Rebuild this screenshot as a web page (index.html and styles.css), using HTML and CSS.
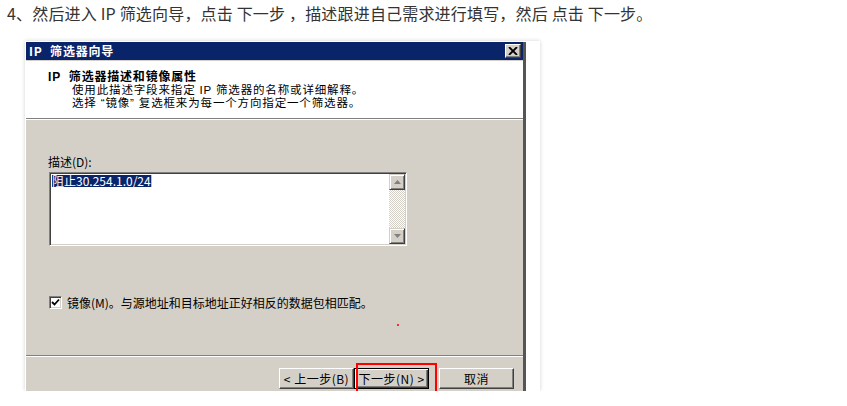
FILE: index.html
```html
<!DOCTYPE html>
<html lang="zh-CN">
<head>
<meta charset="utf-8">
<title>IP 筛选器向导</title>
<link rel="stylesheet" href="styles.css">
</head>
<body>
<p class="step">4、然后进入 IP 筛选向导，点击 下一步 ，描述跟进自己需求进行填写，然后 点击 下一步。</p>
<div class="shot">
  <div class="dialog">
    <div class="titlebar">
      <span class="title">IP 筛选器向导</span>
      <span class="close"><svg width="10" height="8" viewBox="0 0 10 8"><path d="M1 0 L9 8 M9 0 L1 8" stroke="#000" stroke-width="1.8" fill="none"/></svg></span>
    </div>
    <div class="header">
      <div class="h-title">IP 筛选器描述和镜像属性</div>
      <div class="h-sub">使用此描述字段来指定 IP 筛选器的名称或详细解释。</div>
      <div class="h-sub">选择<span class="q-open">“</span>镜像<span class="q-close">”</span>复选框来为每一个方向指定一个筛选器。</div>
    </div>
    <div class="body">
      <div class="label">描述(D):</div>
      <div class="textbox">
        <div class="tb-text"><span class="sel">阻止30.254.1.0/24</span><span class="caret"></span></div>
        <div class="scrollbar">
          <div class="sb-btn"><svg width="7" height="4" viewBox="0 0 7 4"><path d="M3.5 0 L7 4 L0 4 Z" fill="#808080"/></svg></div>
          <div class="sb-track"></div>
          <div class="sb-btn"><svg width="7" height="4" viewBox="0 0 7 4"><path d="M0 0 L7 0 L3.5 4 Z" fill="#808080"/></svg></div>
        </div>
      </div>
      <div class="check-row">
        <span class="checkbox"><svg width="9" height="9" viewBox="0 0 9 9"><polyline points="1,4 3.5,6.5 8,1.5" stroke="#000" stroke-width="1.8" fill="none"/></svg></span>
        <span class="check-label">镜像(M)。与源地址和目标地址正好相反的数据包相匹配。</span>
      </div>
    </div>
    <div class="footer">
      <button class="btn">&lt; 上一步(B)</button>
      <button class="btn default">下一步(N) &gt;</button>
      <button class="btn cancel">取消</button>
    </div>
  </div>
  <span class="red-dot"></span>
  <span class="highlight"></span>
</div>
</body>
</html>
```
FILE: styles.css
```css
html, body {
  margin: 0;
  padding: 0;
  background: #fff;
}

body {
  font-family: "Noto Sans CJK SC", "Liberation Sans", sans-serif;
}

.step {
  margin: 0;
  padding: 4px 0 0 7px;
  font-size: 16px;
  line-height: 18px;
  letter-spacing: 0.18px;
  color: #333;
}

.shot {
  position: relative;
  box-sizing: border-box;
  width: 515px;
  height: 350px;
  margin: 19px 0 0 25px;
  padding: 1px 0 0 1px;
  background: #fff;
  box-shadow: 0 0 4px rgba(0, 0, 0, 0.18);
  overflow: hidden;
}

.dialog {
  width: 497px;
  background: #d4d0c8;
  border-right: 3px solid #555;
  font-size: 12px;
  color: #000;
}

.titlebar {
  height: 18px;
  background: #0a246a;
  border-bottom: 1px solid #d4d0c8;
  display: flex;
  align-items: center;
  justify-content: space-between;
  padding: 0 2px 0 3px;
  color: #fff;
  font-weight: bold;
  line-height: 12px;
}

.title {
  letter-spacing: 0.8px;
  word-spacing: 4px;
}

.close {
  box-sizing: border-box;
  width: 16px;
  height: 14px;
  background: #d4d0c8;
  border: 1px solid;
  border-color: #fff #404040 #404040 #fff;
  box-shadow: inset -1px -1px #808080;
  display: flex;
  align-items: center;
  justify-content: center;
}

.header {
  box-sizing: border-box;
  height: 58px;
  padding: 10px 0 0 22px;
  background: #fff;
  border-bottom: 1px solid #808080;
  font-family: "Liberation Sans", "Noto Sans CJK SC", sans-serif;
  font-size: 11.5px;
  line-height: 13px;
}

.h-title {
  font-weight: bold;
  font-size: 12px;
  letter-spacing: 0.8px;
  word-spacing: 4px;
}

.h-sub {
  padding-left: 24px;
  letter-spacing: 0.85px;
}

.q-open {
  margin-left: 4px;
}

.q-close {
  margin-right: 4px;
}

.body {
  box-sizing: border-box;
  height: 236px;
  border-top: 1px solid #fff;
  padding: 36px 0 0 22px;
  line-height: 12px;
}

.label {
  height: 12px;
}

.textbox {
  box-sizing: border-box;
  width: 358px;
  height: 74px;
  margin: 4px 0 0 1px;
  background: #fff;
  border: 1px solid;
  border-color: #808080 #fff #fff #808080;
  box-shadow: inset 1px 1px #404040, inset -1px -1px #d4d0c8;
  padding: 1px;
  display: flex;
}

.tb-text {
  flex: 1;
  padding: 1px 0 0 1px;
  display: flex;
  align-items: flex-start;
}

.sel {
  background: #0a246a;
  color: #fff;
  line-height: 12px;
  white-space: nowrap;
}

.caret {
  width: 1px;
  height: 12px;
  background: #e8c050;
}

.scrollbar {
  width: 16px;
  display: flex;
  flex-direction: column;
}

.sb-btn {
  box-sizing: border-box;
  width: 16px;
  height: 16px;
  background: #d4d0c8;
  border: 1px solid;
  border-color: #d4d0c8 #404040 #404040 #d4d0c8;
  box-shadow: inset 1px 1px #fff, inset -1px -1px #808080;
  display: flex;
  align-items: center;
  justify-content: center;
}

.sb-track {
  flex: 1;
  background: repeating-conic-gradient(#d4d0c8 0 25%, #fff 0 50%) 0 0 / 2px 2px;
}

.check-row {
  display: flex;
  align-items: center;
  margin: 50px 0 0 1px;
  height: 13px;
}

.checkbox {
  box-sizing: border-box;
  width: 13px;
  height: 13px;
  background: #fff;
  border: 1px solid;
  border-color: #808080 #fff #fff #808080;
  box-shadow: inset 1px 1px #404040, inset -1px -1px #d4d0c8;
  display: flex;
  align-items: center;
  justify-content: center;
}

.check-label {
  margin-left: 5px;
}

.footer {
  display: flex;
  justify-content: flex-end;
  padding: 12px 9px 0 0;
  height: 40px;
  border-top: 1px solid #808080;
  box-shadow: inset 0 1px #fff;
}

.btn {
  box-sizing: border-box;
  width: 75px;
  height: 21px;
  padding: 0;
  margin: 0;
  background: #d4d0c8;
  border: 1px solid;
  border-color: #fff #404040 #404040 #fff;
  box-shadow: inset -1px -1px #808080;
  font-family: "Noto Sans CJK SC", "Liberation Sans", sans-serif;
  font-size: 12px;
  line-height: 12px;
  letter-spacing: 0.5px;
  color: #000;
}

.btn.default {
  border-color: #000;
  box-shadow: inset 1px 1px #fff, inset -1px -1px #404040, inset -2px -2px #808080;
}

.btn.cancel {
  margin-left: 10px;
}

.red-dot {
  position: absolute;
  left: 372px;
  top: 283px;
  width: 2px;
  height: 2px;
  background: #e33;
}

.highlight {
  position: absolute;
  left: 331px;
  top: 322px;
  width: 81px;
  height: 60px;
  box-sizing: border-box;
  border: 2px solid #f00;
}
```
